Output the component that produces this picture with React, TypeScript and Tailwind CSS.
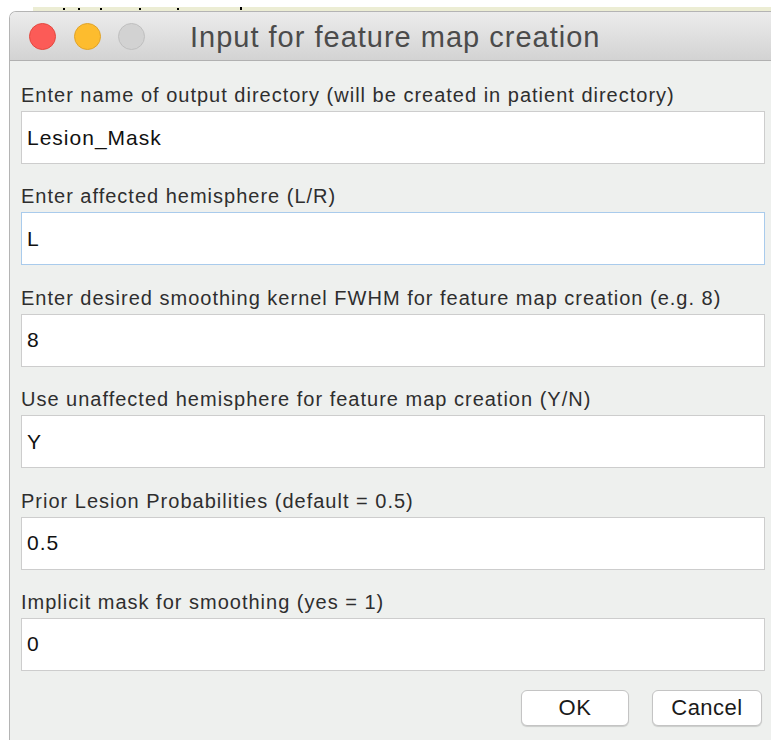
import { useState } from "react";

interface Field {
  label: string;
  value: string;
  focused?: boolean;
}

const fields: Field[] = [
  { label: "Enter name of output directory (will be created in patient directory)", value: "Lesion_Mask" },
  { label: "Enter affected hemisphere (L/R)", value: "L", focused: true },
  { label: "Enter desired smoothing kernel FWHM for feature map creation (e.g. 8)", value: "8" },
  { label: "Use unaffected hemisphere for feature map creation (Y/N)", value: "Y" },
  { label: "Prior Lesion Probabilities (default = 0.5)", value: "0.5" },
  { label: "Implicit mask for smoothing (yes = 1)", value: "0" },
];

function TrafficLights() {
  return (
    <div className="flex items-center gap-[17.5px] pl-[19px]">
      <span className="w-[27px] h-[27px] rounded-full bg-[#fc5b57] border border-[#e3483f]" />
      <span className="w-[27px] h-[27px] rounded-full bg-[#fdbc2e] border border-[#e0a329]" />
      <span className="w-[27px] h-[27px] rounded-full bg-[#d2d2d2] border border-[#bfbfbf]" />
    </div>
  );
}

export default function App() {
  const [values, setValues] = useState(fields.map((f) => f.value));

  return (
    <div className="w-[771px] h-[740px] bg-white overflow-hidden font-['Liberation_Sans',Arial,sans-serif]">
      {/* strip of the window behind */}
      <div className="h-[11px] flex">
        <div className="ml-[33px] mt-[7px] flex-1 h-[4px] bg-[#ecedd4] relative">
          <span className="absolute left-[30px] top-[1px] w-[2px] h-[2px] bg-black" />
          <span className="absolute left-[45px] top-[1px] w-[2px] h-[2px] bg-black" />
          <span className="absolute left-[67px] top-[1px] w-[2px] h-[2px] bg-black" />
          <span className="absolute left-[106px] top-[1px] w-[2px] h-[2px] bg-black" />
          <span className="absolute left-[144px] top-[1px] w-[2px] h-[2px] bg-black" />
          <span className="absolute left-[207px] top-[0px] w-[2px] h-[3px] bg-black" />
        </div>
      </div>

      <div className="ml-[9px] h-[729px] flex flex-col rounded-tl-[7px] border-l border-t border-[#b4b4b4] overflow-hidden">
        <div className="h-[49px] shrink-0 flex items-center bg-gradient-to-b from-[#ececec] to-[#d3d3d3] border-b border-[#b1b1b1]">
          <TrafficLights />
          <div className="ml-[45px] text-[29px] tracking-[1px] text-[#4b4b4b] leading-none pt-[2px]">
            Input for feature map creation
          </div>
        </div>

        <div className="flex-1 bg-[#eef0ee] pl-[11px] pr-[6px] pt-[21px] flex flex-col">
          <div className="flex flex-col gap-[19.4px]">
            {fields.map((f, i) => (
              <div key={f.label} className="flex flex-col">
                <label className="h-[26px] leading-[26px] mb-[3px] text-[20px] tracking-[1px] text-[#2e2e2e] whitespace-nowrap">
                  {f.label}
                </label>
                <input
                  value={values[i]}
                  onChange={(e) =>
                    setValues((v) => v.map((x, j) => (j === i ? e.target.value : x)))
                  }
                  className={
                    "h-[53px] bg-white px-[5px] text-[21px] tracking-[1px] text-[#111] outline-none border " +
                    (f.focused ? "border-[#a9cbec]" : "border-[#cdcdcd]")
                  }
                />
              </div>
            ))}
          </div>

          <div className="flex justify-end gap-[23px] mt-[19px] pr-[3px]">
            <button className="w-[108px] h-[36px] rounded-[6px] bg-white border border-[#c4c4c4] shadow-[0_1px_1px_rgba(0,0,0,0.15)] text-[22px] tracking-[0.5px] text-[#1a1a1a]">
              OK
            </button>
            <button className="w-[110px] h-[36px] rounded-[6px] bg-white border border-[#c4c4c4] shadow-[0_1px_1px_rgba(0,0,0,0.15)] text-[22px] tracking-[0.5px] text-[#1a1a1a]">
              Cancel
            </button>
          </div>
        </div>
      </div>
    </div>
  );
}
